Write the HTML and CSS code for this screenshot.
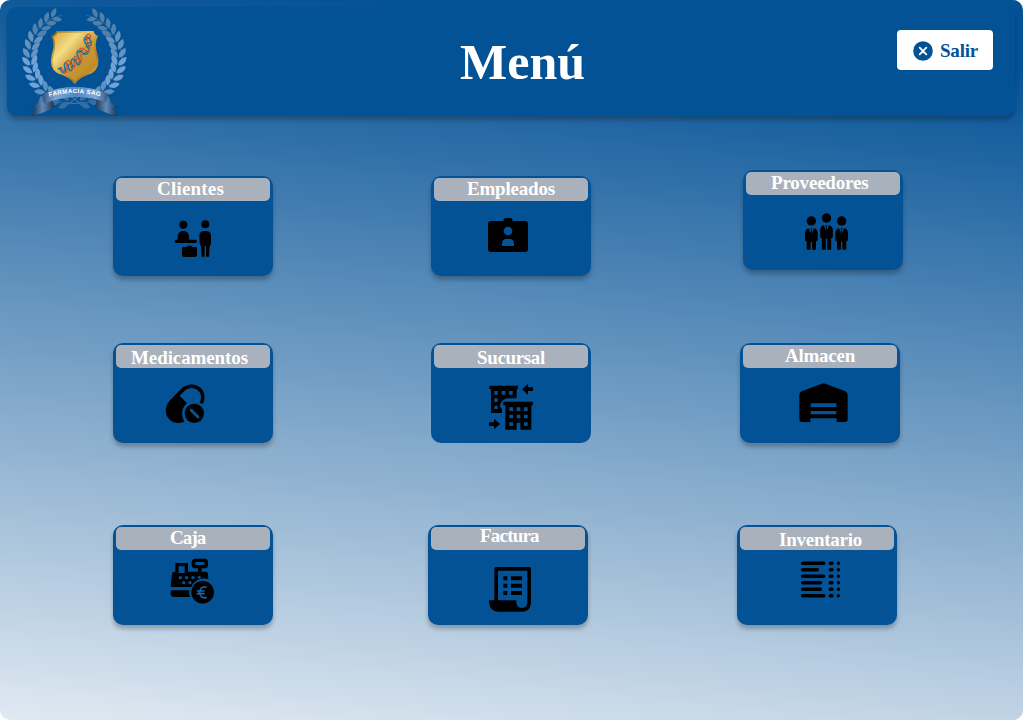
FILE: index.html
```html
<!DOCTYPE html>
<html lang="es">
<head>
<meta charset="utf-8">
<title>Menú</title>
<link rel="stylesheet" href="styles.css">
</head>
<body>
<div class="screen">
  <header class="header">
    <svg class="logo" viewBox="60 18 324 336" role="img" aria-label="Farmacia SAG">
      <defs>
        <linearGradient id="gold" x1="0" y1="0" x2="1" y2="1">
          <stop offset="0" stop-color="#d9a93a"/><stop offset=".3" stop-color="#f3dc86"/><stop offset=".55" stop-color="#c99a35"/><stop offset="1" stop-color="#b98220"/>
        </linearGradient>
        <linearGradient id="rim" x1="0" y1="0" x2="1" y2="1">
          <stop offset="0" stop-color="#8a6a1e"/><stop offset=".4" stop-color="#e7c25a"/><stop offset=".7" stop-color="#a8761c"/><stop offset="1" stop-color="#f0cf6c"/>
        </linearGradient>
        <linearGradient id="ribbon"><stop offset="0" stop-color="#31547c"/><stop offset=".2" stop-color="#7fa6d4"/><stop offset=".5" stop-color="#4f86c8"/><stop offset=".8" stop-color="#7fa6d4"/><stop offset="1" stop-color="#31547c"/></linearGradient>
        <linearGradient id="tail"><stop offset="0" stop-color="#16293c"/><stop offset=".14" stop-color="#5d8ab8"/><stop offset=".28" stop-color="#1b2f45"/><stop offset=".72" stop-color="#1b2f45"/><stop offset=".86" stop-color="#5d8ab8"/><stop offset="1" stop-color="#16293c"/></linearGradient>
        <g id="pair">
          <path d="M2 134C0 119-12 110-26 114C-24 128-12 136 2 134Z"/>
          <path d="M2 138C0 154-12 162-27 159C-24 145-12 136 2 138Z"/>
        </g>
        <g id="branch">
          <path d="M18 138A136 136 0 1 1 -38 -130" fill="none" stroke="#5584ae" stroke-width="2"/>
          <g fill="#3f74a6">
            <use href="#pair" transform="rotate(8)"/>
            <use href="#pair" transform="rotate(19)"/>
          </g>
          <g fill="#6c9cca">
            <use href="#pair" transform="rotate(30)"/>
            <use href="#pair" transform="rotate(41)"/>
          </g>
          <g fill="#86b1df">
            <use href="#pair" transform="rotate(51)"/>
            <use href="#pair" transform="rotate(61)"/>
            <use href="#pair" transform="rotate(71)"/>
            <use href="#pair" transform="rotate(81)"/>
          </g>
          <g fill="#749fc6">
            <use href="#pair" transform="rotate(91)"/>
            <use href="#pair" transform="rotate(101)"/>
            <use href="#pair" transform="rotate(111)"/>
          </g>
          <g fill="#5e8aae">
            <use href="#pair" transform="rotate(121)"/>
            <use href="#pair" transform="rotate(131) translate(0 10) scale(.93)"/>
            <use href="#pair" transform="rotate(141) translate(0 13) scale(.92)"/>
            <use href="#pair" transform="rotate(151) translate(0 20) scale(.88)"/>
          </g>
        </g>
        <path id="arc" d="M148 290Q226 268 308 291"/>
      </defs>
      <g class="wreath">
        <use href="#branch" transform="translate(223 173) scale(.97 .98)"/>
        <use href="#branch" transform="translate(223 173) scale(-.97 .98)"/>
      </g>
      <path d="M169 93H281Q283 104 294 108Q281 132 293 164Q302 202 276 220Q240 230 224 253Q208 230 172 220Q146 202 155 164Q167 132 154 108Q166 104 169 93Z" fill="url(#rim)"/>
      <path d="M173 98H276Q279 107 287 111Q277 134 288 167Q295 199 272 214Q238 224 224 244Q210 224 176 214Q153 199 160 167Q171 134 161 111Q170 107 173 98Z" fill="url(#gold)"/>
      <g fill="none" stroke-width="4.500" stroke-linecap="round">
        <path class="helix-blue" d="M175 206C184 202 183 219 192 219C204 218 185 190 197 188C207 187 204 221 215 210C226 199 204 185 218 177C230 171 228 204 239 193C249 181 223 165 233 153C242 143 253 176 265 157C274 140 246 131 254 114C260 104 277 122 273 134"/>
        <path class="helix-red" d="M181 202C192 205 187 222 199 217C208 212 191 189 203 182C216 178 209 211 222 204C232 197 212 176 226 169C239 165 235 195 244 184C252 172 229 154 242 145C254 140 256 163 268 150C275 138 252 122 259 107C264 98 276 106 270 114"/>
        <path d="M179 208L184 203M193 213L199 205M204 196L212 190M214 202L222 196M223 183L232 175M232 192L241 184M235 158L248 150M248 164L261 156M255 120L270 113M259 132L272 126M258 141L271 137" stroke="#395b70" stroke-width="3"/>
      </g>
      <path d="M205 313Q225 295 239 287M243 314Q226 298 211 287" fill="none" stroke="#41709d" stroke-width="3.500"/>
      <path d="M121 289L113 311L91 322L111 327L94 347Q129 342 164 321L154 290ZM325 289L335 311L356 322L337 327L353 347Q318 342 284 321L294 290Z" fill="url(#tail)"/>
      <path d="M130 280Q122 296 133 311Q225 273 318 307L326 282Q225 240 130 280Z" fill="url(#ribbon)"/>
      <text class="ribbon-text"><textPath href="#arc" textLength="154">FARMACIA SAG</textPath></text>
    </svg>
    <h1 class="title">Menú</h1>
    <button class="exit" type="button">
      <svg class="exit-icon" viewBox="0 0 20 20"><circle cx="10" cy="10" r="9.8"/><path d="M6.7 6.7L13.3 13.3M13.3 6.7L6.7 13.3"/></svg>
      <span>Salir</span>
    </button>
  </header>

  <main class="menu">
    <div class="row row-first">
      <a class="card"><div class="label"><span class="name clientes">Clientes</span></div>
        <svg class="icon" viewBox="24 108 480 225"><circle cx="235" cy="179" r="12"/><circle cx="301" cy="178" r="12"/><path d="M218 224V213Q221 198 235 198Q249 198 252 213V224H272Q276 224 276 229Q276 234 272 234H213Q209 234 209 229Q209 224 213 224ZM283 211Q285 198 297 198H306Q317 199 318 211V236Q318 241 314 242L312 275H303V243H299V275H290L288 242Q284 240 284 236ZM231 250Q231 246 236 246H245Q246 242 250 242H258Q261 242 262 246H271Q276 246 276 250V271Q276 276 271 276H236Q231 276 231 271Z"/></svg></a>
      <a class="card empleados-card"><div class="label"><span class="name empleados">Empleados</span></div>
        <svg class="icon" viewBox="33 108 480 225"><path d="M213 168H250V166Q251 159 258 159H270Q277 159 278 166V168H315Q324 168 324 177V252Q324 261 315 261H213Q204 261 204 252V177Q204 168 213 168Z"/><circle class="cut" cx="264" cy="198" r="13"/><path class="cut" d="M246 243V234Q248 221 260 221H268Q281 222 282 234V243Z"/></svg></a>
      <a class="card proveedores-card"><div class="label"><span class="name proveedores">Proveedores</span></div>
        <svg class="icon" viewBox="24 105 480 225"><defs><g id="person"><circle cx="0" cy="0" r="14"/><path d="M-8 22L0 40L8 22Q18 24 19 35V56Q19 61 14 61V83Q13 87 8 87Q3 87 2 83V62H-2V83Q-3 87-8 87Q-13 87-14 83V61Q-19 61-19 56V35Q-18 24-8 22ZM-3 22H3L1 27L2 34L0 39L-2 34L-1 27Z"/></g></defs><use href="#person" x="229" y="183"/><use href="#person" x="274.500" y="174"/><use href="#person" x="320" y="183"/><path d="M260.500 255H272.500V269H260.500ZM276.500 255H288.500V269H276.500Z"/></svg></a>
    </div>

    <div class="row row-second">
      <a class="card"><div class="label"><span class="name medicamentos">Medicamentos</span></div>
        <svg class="icon" viewBox="24 99 480 225"><path d="M194 197L231 159C248 144 273 145 288 160C300 173 302 190 294 207L284 203C291 190 289 178 281 168C269 156 250 156 239 167L224 182L246 205C231 217 226 237 238 260C221 267 205 264 194 254C179 239 178 214 194 197Z"/><circle cx="268" cy="235" r="29"/><path d="M258 225L279 246" stroke="#045296" stroke-width="9" stroke-linecap="round"/></svg></a>
      <a class="card flat sucursal-card"><div class="label"><span class="name sucursal">Sucursal</span></div>
        <svg class="icon" viewBox="33 99 480 225"><path d="M208 152H294V162H290V190H263C249 192 241 201 240 215L246 222V234H213V162H208ZM339 157V168H324V179L306 163L324 147V157ZM207 262H222V251L240 267L222 283V273H207ZM250 200H339V211H334V284H301V263H290V284H256V211H250Z"/><path class="cut" d="M223 168H233V179H223ZM245 168H256V179H245ZM267 168H278V179H267ZM223 190H233V201H223ZM223 212H233V222H223ZM268 217H279V228H268ZM290 217H301V228H290ZM312 217H323V228H312ZM268 239H279V250H268ZM290 239H301V250H290ZM312 239H323V250H312ZM268 262H279V273H268ZM312 262H323V273H312Z"/></svg></a>
      <a class="card almacen-card"><div class="label"><span class="name almacen">Almacen</span></div>
        <svg class="icon" viewBox="30 99 480 225"><path d="M208 180Q208 172 215 169L276 146Q281 144 286 146L346 169Q353 172 353 180V252Q353 261 344 261H320V250H241V261H217Q208 261 208 252Z"/><path class="cut" d="M242 205H319V216H242ZM242 228H319V238H242Z"/></svg></a>
    </div>

    <div class="row row-third">
      <a class="card"><div class="label"><span class="name caja">Caja</span></div>
        <svg class="icon" viewBox="24 105 480 225"><path fill-rule="evenodd" d="M211 144H249V170H279V160H271Q260 160 260 149V142Q260 131 271 131H298Q309 131 309 142V149Q309 160 298 160H290V170H303Q309 171 309 178L310 192Q282 187 266 204Q261 209 259 216H197L201 177Q202 170 208 170H211ZM221 154V174H239V154ZM274 141Q270 141 270 145Q270 150 274 150H295Q299 150 299 145Q299 141 295 141ZM197 226H253Q250 236 256 246H207Q197 246 197 237Z"/><circle cx="293" cy="232" r="34"/><g class="cut"><circle cx="226" cy="188" r="5"/><circle cx="245" cy="188" r="5"/><circle cx="264" cy="188" r="5"/><circle cx="283" cy="187" r="4.500"/><circle cx="236" cy="203" r="5"/><circle cx="255" cy="203" r="5"/></g><path d="M305 217C293 213 284 221 284 232C284 244 293 252 305 247M275 228H299M275 236H299" fill="none" stroke="#1f66a6" stroke-width="5"/></svg></a>
      <a class="card factura-card"><div class="label"><span class="name factura">Factura</span></div>
        <svg class="icon" viewBox="24 105 480 225"><path fill-rule="evenodd" d="M228 156H327Q333 156 333 162V264Q331 287 311 290H234Q211 289 207 264V256H223V162Q223 156 228 156ZM234 167V256H289C288 271 294 279 306 279C317 279 322 272 322 262V167Z"/><path d="M250 184H262V196H250ZM273 184H306V196H273ZM250 206H262V218H250ZM273 206H306V218H273ZM250 228H262V240H250ZM273 228H306V240H273Z"/></svg></a>
      <a class="card inventario-card"><div class="label"><span class="name inventario">Inventario</span></div>
        <svg class="icon" viewBox="21 105 480 225"><path d="M218 144.500H281M218 164H262M218 183.500H281M218 203H271M218 223H271M218 242.500H281M301 144.500H306M301 164H306M301 183.500H306M301 203H306M301 223H306M301 242.500H306M325 144.500H325.100M325 164H325.100M325 183.500H325.100M325 203H325.100M325 223H325.100M325 242.500H325.100" stroke="#000" stroke-width="10.500" stroke-linecap="round"/></svg></a>
    </div>
  </main>
</div>
</body>
</html>
```

FILE: styles.css
```css
* { box-sizing: border-box; }
body { margin: 0; background: #fff; font-family: "Liberation Serif", serif; font-weight: 700; }
.screen {
  width: 1023px; height: 720px; padding: 7px 8px 0 7px; overflow: hidden;
  border-radius: 10px;
  background: linear-gradient(186deg, #045296 8%, #e0e9f2 100%);
}
.header {
  display: flex; height: 109px; border-radius: 10px;
  background: #045296; box-shadow: 0 4px 4px rgba(0, 0, 0, .25);
}
.logo { width: 108px; height: 112px; margin: -1px 0 0 13px; flex: none; }
.wreath { opacity: .85; }
.helix-blue { stroke: #24749c; }
.helix-red { stroke: #d35b35; }
.ribbon-text { font: 700 18.5px "Liberation Sans", sans-serif; fill: #fff; }
.title {
  width: 130px; margin: 27px 0 0 332px;
  color: #fff; font-size: 50px; line-height: 56px; letter-spacing: 0;
}
.exit {
  display: flex; align-items: center; gap: 7px;
  width: 96px; height: 40px; margin: 23px 22px 0 auto; padding: 1px 0 0 16px;
  border: 0; border-radius: 4px; background: #fff; color: #045296;
  font: 700 19px/22px "Liberation Serif", serif; letter-spacing: -.2px;
}
.exit-icon { width: 20px; height: 20px; flex: none; fill: #045296; }
.exit-icon path { stroke: #fff; stroke-width: 1.8; stroke-linecap: round; }
.menu { padding-left: 106px; }
.row { display: flex; align-items: flex-start; }
.row-first { padding-top: 60px; }
.row-second { padding-top: 67px; }
.row-third { padding-top: 82px; }
.card {
  width: 160px; height: 100px; padding: 2px 3px 0; flex: none;
  border-radius: 10px; background: #045296;
  box-shadow: 0 4px 4px rgba(0, 0, 0, .25);
}
.flat { box-shadow: none; }
.empleados-card, .sucursal-card { margin-left: 158px; }
.proveedores-card { margin: -6px 0 0 152px; }
.almacen-card { margin-left: 149px; }
.factura-card { margin-left: 155px; }
.inventario-card { margin-left: 149px; }
.label { display: flex; height: 23px; border-radius: 5px; background: #a9b1bc; }
.name { color: #fff; font-size: 19px; line-height: 23px; white-space: nowrap; }
.clientes { margin: -1px 0 0 41px; letter-spacing: .2px; }
.empleados { margin: -1px 0 0 33px; letter-spacing: -.2px; }
.proveedores { margin: -1px 0 0 25px; letter-spacing: -.2px; }
.medicamentos { margin: 1px 0 0 15px; letter-spacing: -.1px; }
.sucursal { margin: 1px 0 0 43px; letter-spacing: -.35px; }
.almacen { margin: -1px 0 0 42px; letter-spacing: -.25px; }
.caja { margin: -1px 0 0 54px; letter-spacing: -.9px; }
.factura { margin: -3px 0 0 49px; letter-spacing: -.8px; }
.inventario { margin: 1px 0 0 39px; letter-spacing: -.25px; }
.icon { display: block; width: 160px; height: 75px; margin-left: -3px; }
.cut { fill: #045296; }
```
